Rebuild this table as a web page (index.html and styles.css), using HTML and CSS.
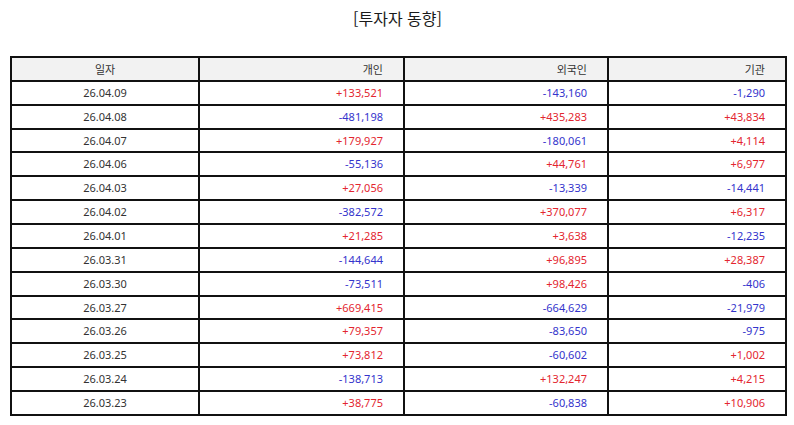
FILE: index.html
```html
<!DOCTYPE html>
<html lang="ko">
<head>
<meta charset="utf-8">
<title>투자자 동향</title>
<link rel="stylesheet" href="styles.css">
</head>
<body>
<div class="page">
  <h1 class="title">[투자자 동향]</h1>
  <table class="trend">
    <colgroup>
      <col class="c-date"><col class="c-ind"><col class="c-for"><col class="c-inst">
    </colgroup>
    <thead>
      <tr><th class="center">일자</th><th>개인</th><th>외국인</th><th>기관</th></tr>
    </thead>
    <tbody>
      <tr><td class="center">26.04.09</td><td class="up">+133,521</td><td class="down">-143,160</td><td class="down">-1,290</td></tr>
      <tr><td class="center">26.04.08</td><td class="down">-481,198</td><td class="up">+435,283</td><td class="up">+43,834</td></tr>
      <tr><td class="center">26.04.07</td><td class="up">+179,927</td><td class="down">-180,061</td><td class="up">+4,114</td></tr>
      <tr><td class="center">26.04.06</td><td class="down">-55,136</td><td class="up">+44,761</td><td class="up">+6,977</td></tr>
      <tr><td class="center">26.04.03</td><td class="up">+27,056</td><td class="down">-13,339</td><td class="down">-14,441</td></tr>
      <tr><td class="center">26.04.02</td><td class="down">-382,572</td><td class="up">+370,077</td><td class="up">+6,317</td></tr>
      <tr><td class="center">26.04.01</td><td class="up">+21,285</td><td class="up">+3,638</td><td class="down">-12,235</td></tr>
      <tr><td class="center">26.03.31</td><td class="down">-144,644</td><td class="up">+96,895</td><td class="up">+28,387</td></tr>
      <tr><td class="center">26.03.30</td><td class="down">-73,511</td><td class="up">+98,426</td><td class="down">-406</td></tr>
      <tr><td class="center">26.03.27</td><td class="up">+669,415</td><td class="down">-664,629</td><td class="down">-21,979</td></tr>
      <tr><td class="center">26.03.26</td><td class="up">+79,357</td><td class="down">-83,650</td><td class="down">-975</td></tr>
      <tr><td class="center">26.03.25</td><td class="up">+73,812</td><td class="down">-60,602</td><td class="up">+1,002</td></tr>
      <tr><td class="center">26.03.24</td><td class="down">-138,713</td><td class="up">+132,247</td><td class="up">+4,215</td></tr>
      <tr><td class="center">26.03.23</td><td class="up">+38,775</td><td class="down">-60,838</td><td class="up">+10,906</td></tr>
    </tbody>
  </table>
</div>
</body>
</html>
```
FILE: styles.css
```css
html, body {
  margin: 0;
  padding: 0;
  background: #ffffff;
}

.page {
  padding: 6px 9px 0 10px;
  font-family: "Noto Sans", "Noto Sans CJK KR", sans-serif;
  color: #222;
}

.title {
  margin: 0;
  height: 50px;
  font-family: "Noto Sans CJK KR", sans-serif;
  font-size: 16px;
  font-weight: 400;
  line-height: 24px;
  text-align: center;
  color: #1a1a1a;
}

.trend {
  width: 775px;
  table-layout: fixed;
  border-collapse: separate;
  border-spacing: 0;
  border: 1px solid #111;
  font-size: 11px;
  color: #333;
}

.c-date { width: 188px; }
.c-ind { width: 205px; }
.c-for { width: 204px; }
.c-inst { width: 178px; }

.trend th,
.trend td {
  border: 1px solid #111;
  height: 21.86px;
  padding: 0 20px 0 4px;
  text-align: right;
  font-weight: 400;
  line-height: 20px;
  white-space: nowrap;
}

.trend th {
  background: #f2f2f2;
  font-family: "Noto Sans CJK KR", sans-serif;
}

.trend .center {
  text-align: center;
  padding: 0;
}

.trend .up { color: #e3262f; }
.trend .down { color: #3434cc; }
```
